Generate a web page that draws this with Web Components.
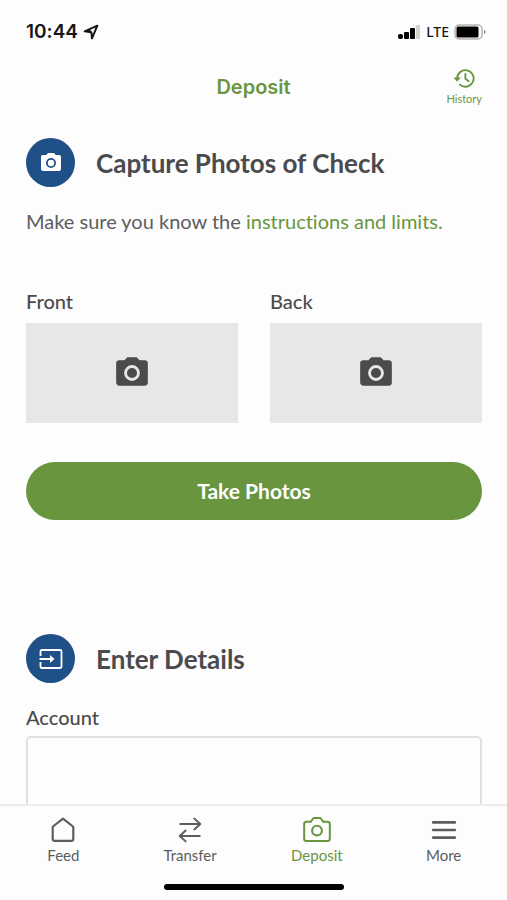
<!DOCTYPE html>
<html lang="en">
<head>
<meta charset="utf-8">
<meta name="viewport" content="width=device-width, initial-scale=1">
<title>Deposit</title>
<style>
:root {
  --green: #69953f;
  --blue: #1f5088;
  --text: #4b4b4d;
  --text-soft: #5c5c5e;
  --tile: #e7e7e7;
  --line: #e0e0e0;
  --font-ui: Inter, "Liberation Sans", sans-serif;
  --font-body: Lato, "Noto Sans", sans-serif;
}

body {
  margin: 0;
  background: #fdfdfd;
  color: var(--text);
  font-family: var(--font-body);
  font-variant-ligatures: none;
}
</style>
</head>
<body>
<deposit-app>
  <status-bar slot="top" time="10:44" network="LTE"></status-bar>
  <nav-header slot="top" action="History">Deposit</nav-header>

  <form-section icon="camera">
    <span slot="title">Capture Photos of Check</span>
    <help-text href="#instructions">
      Make sure you know the
      <span slot="link">instructions and limits.</span>
    </help-text>
    <photo-grid>
      <photo-tile>Front</photo-tile>
      <photo-tile>Back</photo-tile>
    </photo-grid>
    <pill-button>Take Photos</pill-button>
  </form-section>

  <form-section icon="enter">
    <span slot="title">Enter Details</span>
    <select-field>Account</select-field>
  </form-section>

  <tab-bar slot="bottom">
    <tab-item icon="home" href="#feed">Feed</tab-item>
    <tab-item icon="transfer" href="#transfer">Transfer</tab-item>
    <tab-item icon="camera-outline" href="#deposit" active>Deposit</tab-item>
    <tab-item icon="menu" href="#more">More</tab-item>
  </tab-bar>
</deposit-app>

<script>
const icons = {
  camera: `<path fill="currentColor" fill-rule="evenodd" d="M9 2 7.200 4H4a2 2 0 0 0-2 2v12c0 1.100.9 2 2 2h16a2 2 0 0 0 2-2V6a2 2 0 0 0-2-2h-3.200L15 2H9Zm3 15a5 5 0 1 1 0-10 5 5 0 0 1 0 10Z"/><circle cx="12" cy="12" r="3.200" fill="currentColor"/>`,
  enter: `<path fill="none" stroke="currentColor" stroke-width="1.800" stroke-linejoin="round" d="M1.500 9V4.500c0-1 .5-1.500 1.500-1.500h18c1 0 1.500.5 1.500 1.500v15c0 1-.5 1.500-1.500 1.500H3c-1 0-1.500-.5-1.500-1.500V15M.5 12h12"/><path fill="currentColor" d="m11 8 4.500 4-4.500 4z"/>`,
  home: `<path fill="none" stroke="currentColor" stroke-width="2" stroke-linejoin="round" d="m12 1.500 9.500 7.500v11a2 2 0 0 1-2 2h-15a2 2 0 0 1-2-2V9z"/>`,
  transfer: `<path fill="none" stroke="currentColor" stroke-width="1.800" stroke-linecap="round" stroke-linejoin="round" d="M3 6.500h18.500M16 1.500l5.500 5-5.500 5M21 17.500H2.500M8 12.500l-5.500 5 5.500 5"/>`,
  "camera-outline": `<path fill="none" stroke="currentColor" stroke-width="1.700" stroke-linejoin="round" d="M3 5h3.700L8.500 2.400c.3-.5.700-.7 1.300-.7h4.400c.6 0 1 .2 1.300.7L17.300 5H21c1.200 0 2 .8 2 2v12.500c0 1.200-.8 2-2 2H3c-1.200 0-2-.8-2-2V7c0-1.200.8-2 2-2Z"/><circle cx="12" cy="12.500" r="4.200" fill="none" stroke="currentColor" stroke-width="1.800"/>`,
  menu: `<path fill="none" stroke="currentColor" stroke-width="2.400" stroke-linecap="round" d="M2 5h20M2 12h20M2 19h20"/>`,
  history: `<path fill="none" stroke="currentColor" stroke-width="2" stroke-linecap="round" d="M4.500 13a9 9 0 1 1 3 6.200M13.500 7.500V12.500l3.500 3"/><path fill="currentColor" d="M.5 11.500h8L4.500 16z"/>`,
  location: `<path fill="none" stroke="currentColor" stroke-width="3" stroke-linejoin="round" d="M21.500 2.500 2.500 11l10 1.500 1 9z"/><path fill="currentColor" d="m2.500 11 8-3.500 2 5z"/>`,
};

const svg = (name) =>
  `<svg aria-hidden="true" viewBox="0 0 24 24">${icons[name]}</svg>`;

const shared = `
:host { display: block; }
* { box-sizing: border-box; }
svg { display: block; flex: none; }
button, select { font: inherit; color: inherit; margin: 0; }
button { border: none; padding: 0; cursor: pointer; }
a { color: inherit; text-decoration: none; }
`;

class BaseElement extends HTMLElement {
  connectedCallback() {
    if (this.shadowRoot) return;
    this.attachShadow({ mode: "open" }).innerHTML =
      `<style>${shared}${this.styles()}</style>${this.render()}`;
  }
}

class DepositApp extends BaseElement {
  styles() {
    return `
:host {
  display: flex;
  flex-direction: column;
  height: 100vh;
}
main {
  flex: 1;
  min-height: 0;
  overflow-y: auto;
  scrollbar-width: none;
  padding: 26px 25px 0 26px;
  display: flex;
  flex-direction: column;
  gap: 114px;
}`;
  }
  render() {
    return `<slot name="top"></slot><main><slot></slot></main><slot name="bottom"></slot>`;
  }
}

class StatusBar extends BaseElement {
  styles() {
    return `
:host {
  display: flex;
  align-items: center;
  justify-content: space-between;
  padding: 20px 21px 0 26px;
  color: #161616;
  font-family: var(--font-ui);
  line-height: 24px;
}
div { display: flex; align-items: center; gap: 5px; }
.time { font-size: 19px; font-weight: 600; }
.network { font-family: "Noto Sans", sans-serif; font-size: 14px; font-weight: 500; }
.location { width: 16px; height: 16px; }
.signal { width: 23px; height: 16px; }
.battery { width: 32px; height: 16px; }`;
  }
  render() {
    return `
<div>
  <span class="time">${this.getAttribute("time")}</span>
  <svg class="location" aria-hidden="true" viewBox="0 0 24 24">${icons.location}</svg>
</div>
<div>
  <svg class="signal" aria-hidden="true" viewBox="0 0 23 16">
    <g fill="#000">
      <rect x="0" y="10" width="5" height="5" rx="2"/>
      <rect x="6" y="8" width="5" height="7" rx="1"/>
      <rect x="12" y="4" width="5" height="11" rx="1"/>
    </g>
    <rect x="18" y="1" width="4" height="14" rx="1" fill="#d2d2d2"/>
  </svg>
  <span class="network">${this.getAttribute("network")}</span>
  <svg class="battery" aria-hidden="true" viewBox="0 0 32 16">
    <rect x="1" y="1" width="27" height="14" rx="4" fill="none" stroke="#b4b4b4" stroke-width="1.500"/>
    <rect x="2.500" y="2.500" width="22" height="11" rx="1.500" fill="#000"/>
    <path d="M30 6c2 .5 2 3.500 0 4z" fill="#888"/>
  </svg>
</div>`;
  }
}

class NavHeader extends BaseElement {
  styles() {
    return `
:host {
  display: grid;
  grid-template-columns: 1fr auto 1fr;
  align-items: center;
  padding: 23px 25px 5px;
  color: var(--green);
}
h1 {
  grid-column: 2;
  margin: 0;
  font: 600 20px/28px var(--font-ui);
}
button {
  justify-self: end;
  display: flex;
  flex-direction: column;
  align-items: center;
  gap: 2px;
  background: none;
  font-size: 11px;
  line-height: 16px;
}
svg { width: 22px; height: 22px; }`;
  }
  render() {
    return `
<h1><slot></slot></h1>
<button type="button">${svg("history")}<span>${this.getAttribute("action")}</span></button>`;
  }
}

class FormSection extends BaseElement {
  styles() {
    return `
header { display: flex; align-items: center; gap: 21px; }
.badge {
  display: grid;
  place-items: center;
  width: 49px;
  height: 49px;
  border-radius: 50%;
  background: var(--blue);
  color: #fff;
}
svg { width: 24px; height: 24px; }
h2 { margin: 0; font-size: 26px; line-height: 32px; font-weight: 700; }`;
  }
  render() {
    return `
<header>
  <span class="badge">${svg(this.getAttribute("icon"))}</span>
  <h2><slot name="title"></slot></h2>
</header>
<slot></slot>`;
  }
}

class HelpText extends BaseElement {
  styles() {
    return `
p { margin: 20px 0 0; color: var(--text-soft); font-size: 20px; line-height: 28px; }
a { color: var(--green); }`;
  }
  render() {
    return `<p><slot></slot><a href="${this.getAttribute("href")}"><slot name="link"></slot></a></p>`;
  }
}

class PhotoGrid extends BaseElement {
  styles() {
    return `
:host {
  display: grid;
  grid-template-columns: 1fr 1fr;
  gap: 32px;
  margin-top: 52px;
}`;
  }
  render() {
    return `<slot></slot>`;
  }
}

class PhotoTile extends BaseElement {
  styles() {
    return `
label { display: block; font-size: 20px; line-height: 28px; font-weight: 500; }
button {
  display: grid;
  place-items: center;
  width: 100%;
  height: 100px;
  margin-top: 8px;
  background: var(--tile);
}
svg { width: 38px; height: 38px; }`;
  }
  render() {
    return `
<label for="photo"><slot></slot></label>
<button id="photo" type="button">${svg("camera")}</button>`;
  }
}

class PillButton extends BaseElement {
  styles() {
    return `
button {
  width: 100%;
  margin-top: 39px;
  padding: 15px 24px;
  border-radius: 30px;
  background: var(--green);
  color: #fff;
  font-size: 21px;
  line-height: 28px;
  font-weight: 700;
}`;
  }
  render() {
    return `<button type="button"><slot></slot></button>`;
  }
}

class SelectField extends BaseElement {
  styles() {
    return `
:host { margin-top: 20px; }
label { display: block; font-size: 20px; line-height: 28px; font-weight: 500; }
select {
  appearance: none;
  display: block;
  width: 100%;
  height: 96px;
  margin: 5px 0 24px;
  padding: 0 20px;
  border: 2px solid var(--line);
  border-radius: 5px;
  background: #fefefe;
}`;
  }
  render() {
    return `
<label for="field"><slot></slot></label>
<select id="field"></select>`;
  }
}

class TabBar extends BaseElement {
  styles() {
    return `
:host { border-top: 2px solid #ececec; padding: 10px 0; }
nav { display: grid; grid-template-columns: repeat(4, 1fr); }
.indicator {
  width: 180px;
  height: 6px;
  margin: 19px auto 0;
  border-radius: 3px;
  background: #000;
}`;
  }
  render() {
    return `<nav><slot></slot></nav><div class="indicator"></div>`;
  }
}

class TabItem extends BaseElement {
  styles() {
    return `
:host { color: var(--text-soft); }
:host([active]) { color: var(--green); }
a {
  display: flex;
  flex-direction: column;
  align-items: center;
  gap: 1px;
  font-size: 15px;
  line-height: 20px;
}
svg { width: 26px; height: 26px; margin: 1px 0; }
:host([active]) svg { width: 32px; height: 28px; margin: 0; }`;
  }
  render() {
    return `<a href="${this.getAttribute("href")}">${svg(this.getAttribute("icon"))}<span><slot></slot></span></a>`;
  }
}

customElements.define("deposit-app", DepositApp);
customElements.define("status-bar", StatusBar);
customElements.define("nav-header", NavHeader);
customElements.define("form-section", FormSection);
customElements.define("help-text", HelpText);
customElements.define("photo-grid", PhotoGrid);
customElements.define("photo-tile", PhotoTile);
customElements.define("pill-button", PillButton);
customElements.define("select-field", SelectField);
customElements.define("tab-bar", TabBar);
customElements.define("tab-item", TabItem);
</script>
</body>
</html>
